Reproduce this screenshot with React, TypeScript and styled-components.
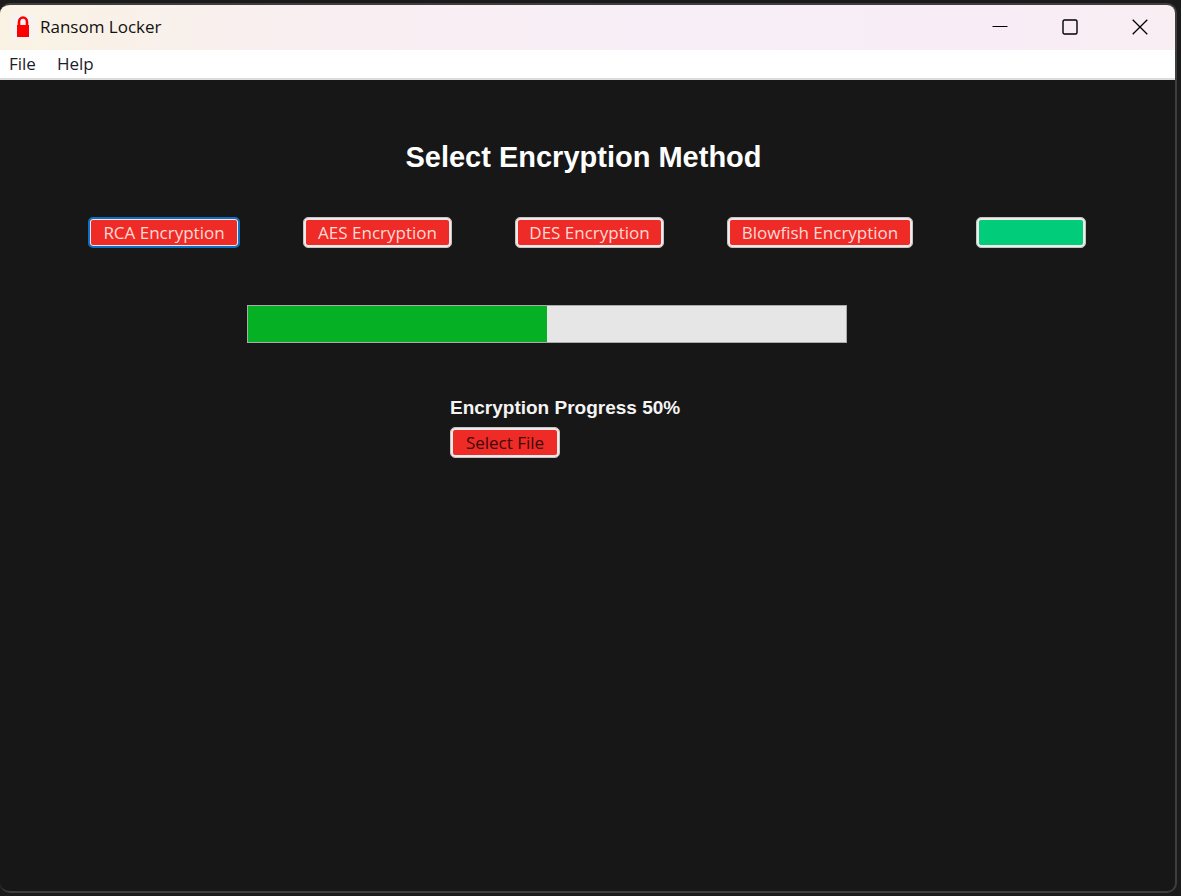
import React from 'react';
import styled, { createGlobalStyle } from 'styled-components';

const GlobalStyle = createGlobalStyle`
  * { box-sizing: border-box; }
  body { margin: 0; background: #1b1b1b; }
`;

const Desktop = styled.div`
  display: flex;
  min-height: 100vh;
  padding: 3px 4px 3px 0;
  font-family: "Open Sans", "Noto Sans", sans-serif;
`;

const AppWindow = styled.div`
  flex: 1;
  display: flex;
  flex-direction: column;
  border: 2px solid #3e3e3e;
  border-left: 0;
  border-radius: 10px;
  overflow: hidden;
  background: #171717;
`;

const TitleBar = styled.header`
  display: flex;
  align-items: center;
  height: 45px;
  padding: 0 0 2px 11px;
  background: linear-gradient(90deg, #faf3e4 0%, #f9f1ea 12%, #f9eff1 25%, #f8eef8 60%, #f8edf6 85%, #f9eef2 100%);
`;

const AppIcon = styled.svg`
  width: 24px;
  height: 24px;
  margin-right: 5px;
`;

const AppName = styled.span`
  flex: 1;
  font-size: 17px;
  line-height: 24px;
  color: #111;
`;

const CaptionButton = styled.button`
  display: flex;
  align-items: center;
  justify-content: center;
  width: 70px;
  height: 43px;
  padding: 0;
  border: 0;
  background: transparent;
`;

const MenuBar = styled.nav`
  display: flex;
  align-items: center;
  gap: 21px;
  height: 30px;
  padding-left: 9px;
  background: #fff;
  border-bottom: 2px solid #dcdcdc;
`;

const MenuItem = styled.button`
  padding: 0;
  border: 0;
  background: transparent;
  font: 17px/24px "Open Sans", "Noto Sans", sans-serif;
  color: #1c1c2c;
`;

const Content = styled.main`
  flex: 1;
  display: flex;
  flex-direction: column;
  padding-top: 59px;
`;

const Heading = styled.h1`
  margin: 0 8px 42px 0;
  text-align: center;
  font: bold 29px/36px "Liberation Sans", Arial, sans-serif;
  color: #fff;
`;

const Methods = styled.div`
  display: flex;
  justify-content: center;
  gap: 63px;
  padding-right: 1px;
`;

const ActionButton = styled.button<{ $width: number; $fill?: string; $ink?: string; $focused?: boolean }>`
  width: ${(p) => p.$width}px;
  height: 31px;
  padding: 0;
  border: ${(p) => (p.$focused ? '2px solid #0a72c4' : '1px solid #c4c4c4')};
  border-radius: 5px;
  box-shadow: inset 0 0 0 ${(p) => (p.$focused ? '1px' : '2px')} #f0eaea;
  background: ${(p) => p.$fill ?? '#ee2b27'};
  font: 17px/24px "Open Sans", "Noto Sans", sans-serif;
  white-space: nowrap;
  color: ${(p) => p.$ink ?? '#ffd9d4'};
`;

const Track = styled.div`
  width: 600px;
  max-width: 100%;
  height: 38px;
  margin: 57px 0 52px 247px;
  border: 1px solid #ababab;
  background: #e6e6e6;
`;

const Fill = styled.div`
  height: 100%;
  background: #06b025;
`;

const Status = styled.div`
  display: flex;
  flex-direction: column;
  align-items: flex-start;
  gap: 6px;
  padding-left: 450px;
`;

const ProgressLabel = styled.p`
  margin: 0;
  font: bold 19px/26px "Liberation Sans", Arial, sans-serif;
  white-space: nowrap;
  color: #f4f4f4;
`;

const methods = [
  { label: 'RCA Encryption', width: 152, focused: true },
  { label: 'AES Encryption', width: 149 },
  { label: 'DES Encryption', width: 149 },
  { label: 'Blowfish Encryption', width: 186 },
];

const progress = 50;

export default function App() {
  return (
    <Desktop>
      <GlobalStyle />
      <AppWindow>
        <TitleBar>
          <AppIcon viewBox="0 0 24 24" aria-hidden="true">
            <rect width="24" height="24" fill="#f6f4f2" />
            <path d="M8 11V7a4 4.5 0 0 1 8 0v4" fill="none" stroke="#fe0000" strokeWidth="2.6" />
            <rect x="6" y="10" width="12" height="12" fill="#fe0000" />
          </AppIcon>
          <AppName>Ransom Locker</AppName>
          <CaptionButton aria-label="Minimize">
            <svg width="16" height="16"><path d="M0.5 7.5h15" stroke="#000" /></svg>
          </CaptionButton>
          <CaptionButton aria-label="Maximize">
            <svg width="16" height="16">
              <rect x="1" y="1" width="14" height="14" rx="1.5" fill="none" stroke="#000" strokeWidth="1.4" />
            </svg>
          </CaptionButton>
          <CaptionButton aria-label="Close">
            <svg width="16" height="16"><path d="M.7.7l14.6 14.6M15.3.7L.7 15.3" stroke="#000" strokeWidth="1.3" /></svg>
          </CaptionButton>
        </TitleBar>
        <MenuBar>
          <MenuItem>File</MenuItem>
          <MenuItem>Help</MenuItem>
        </MenuBar>
        <Content>
          <Heading>Select Encryption Method</Heading>
          <Methods>
            {methods.map((m) => (
              <ActionButton key={m.label} $width={m.width} $focused={m.focused}>
                {m.label}
              </ActionButton>
            ))}
            <ActionButton $width={110} $fill="#00cc7a" aria-label="Start encryption" />
          </Methods>
          <Track role="progressbar" aria-valuenow={progress} aria-valuemin={0} aria-valuemax={100} aria-label="Encryption progress">
            <Fill style={{ width: `${progress}%` }} />
          </Track>
          <Status>
            <ProgressLabel>Encryption Progress {progress}%</ProgressLabel>
            <ActionButton $width={110} $ink="#3d0708">Select File</ActionButton>
          </Status>
        </Content>
      </AppWindow>
    </Desktop>
  );
}
